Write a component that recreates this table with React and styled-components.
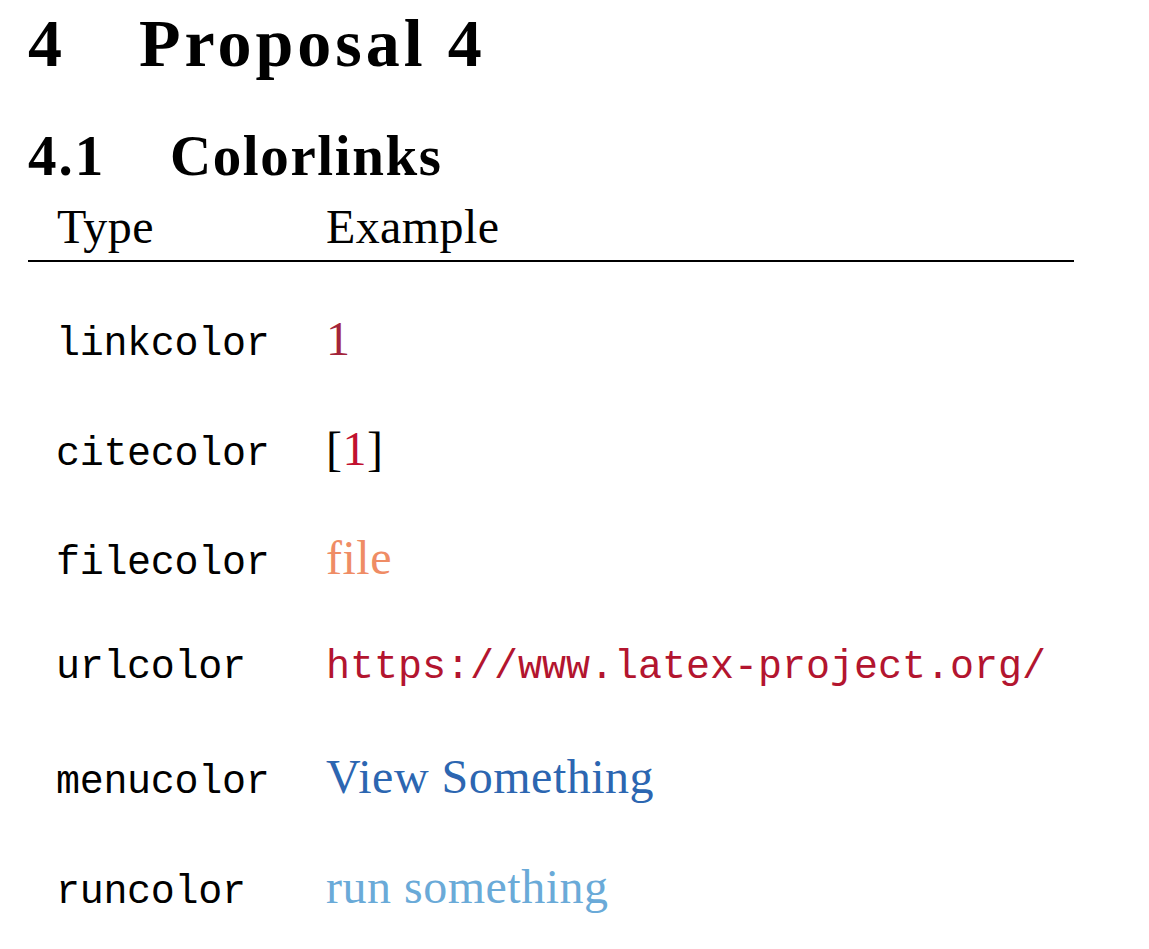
import React from "react";
import styled, { createGlobalStyle } from "styled-components";

const Global = createGlobalStyle`
  html, body { margin: 0; padding: 0; background: #fff; }
  body { font-family: "Liberation Serif", "Times New Roman", serif; color: #000; }
`;

const Page = styled.div`
  padding: 0 0 0 28px;
  width: 1046px;
`;

const Heading = styled.h1`
  display: flex;
  align-items: baseline;
  margin: 0;
  padding-top: 9px;
  font-family: "Liberation Serif", "Times New Roman", serif;
  font-size: 68px;
  font-weight: bold;
  line-height: 68px;
  letter-spacing: 4px;
`;

const SubHeading = styled.h2`
  display: flex;
  align-items: baseline;
  margin: 0;
  padding-top: 50px;
  font-family: "Liberation Serif", "Times New Roman", serif;
  font-size: 57px;
  font-weight: bold;
  line-height: 57px;
  letter-spacing: 1.6px;
`;

const Num = styled.span`
  display: inline-block;
  width: ${(p) => p.$w}px;
  flex: none;
  letter-spacing: ${(p) => p.$ls || 0}px;
`;

const Table = styled.div`
  display: grid;
  grid-template-columns: 298px 1fr;
  grid-template-rows: auto 22px;
  grid-auto-rows: 109.6px;
  align-items: baseline;
  padding-top: 14px;
`;

const HeadCell = styled.div`
  align-self: stretch;
  font-size: 48px;
  line-height: 58px;
  letter-spacing: 0.4px;
  padding-left: ${(p) => (p.$first ? 29 : 0)}px;
  padding-bottom: 4px;
  border-bottom: 2px solid #000;
`;

const Row = styled.div`
  display: contents;
`;

const TypeCell = styled.div`
  font-family: "Liberation Mono", "Courier New", monospace;
  font-size: 40px;
  line-height: 109.6px;
  padding-left: 28px;
  letter-spacing: -0.3px;
`;

const ExampleCell = styled.div`
  line-height: 109.6px;
  color: ${(p) => p.$color || "#000"};
  font-family: ${(p) =>
    p.$mono
      ? `"Liberation Mono", "Courier New", monospace`
      : `"Liberation Serif", "Times New Roman", serif`};
  font-size: ${(p) => (p.$mono ? 40 : 48)}px;
  letter-spacing: ${(p) => (p.$mono ? 0 : 0.5)}px;
`;

const Spacer = styled.div`
  grid-column: 1 / -1;
`;

const Cite = styled.span`
  color: #000;
`;

const Inner = styled.span`
  color: ${(p) => p.$color};
`;

const rows = [
  { type: "linkcolor", content: <Inner $color="#a3243a">1</Inner> },
  {
    type: "citecolor",
    content: (
      <Cite>
        [<Inner $color="#c1112f">1</Inner>]
      </Cite>
    ),
  },
  { type: "filecolor", content: <Inner $color="#ef8c65">file</Inner> },
  {
    type: "urlcolor",
    mono: true,
    content: <Inner $color="#b3152f">https://www.latex-project.org/</Inner>,
  },
  { type: "menucolor", content: <Inner $color="#2c66b1">View Something</Inner> },
  { type: "runcolor", content: <Inner $color="#6aaad8">run something</Inner> },
];

export default function App() {
  return (
    <Page>
      <Global />
      <Heading>
        <Num $w={111}>4</Num>
        <span>Proposal 4</span>
      </Heading>
      <SubHeading>
        <Num $w={142} $ls={2}>4.1</Num>
        <span>Colorlinks</span>
      </SubHeading>
      <Table>
        <HeadCell $first>Type</HeadCell>
        <HeadCell>Example</HeadCell>
        <Spacer />
        {rows.map((r) => (
          <Row key={r.type}>
            <TypeCell>{r.type}</TypeCell>
            <ExampleCell $mono={r.mono}>{r.content}</ExampleCell>
          </Row>
        ))}
      </Table>
    </Page>
  );
}
